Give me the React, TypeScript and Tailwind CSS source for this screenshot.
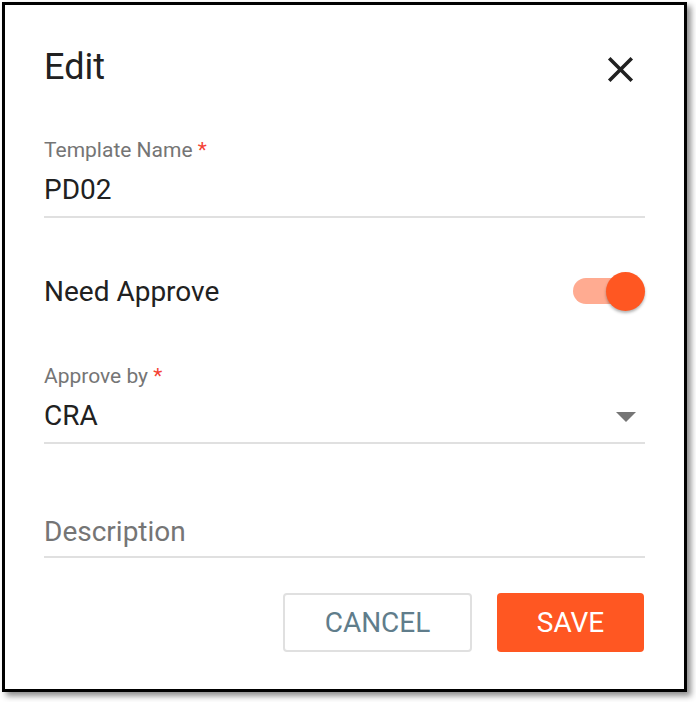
const CloseIcon = () => (
  <svg viewBox="0 0 24 24" className="w-[43px] h-[43px] mt-[1px] mr-[3px] fill-[#212121]">
    <path d="M19 6.41L17.59 5 12 10.59 6.41 5 5 6.41 10.59 12 5 17.59 6.41 19 12 13.41 17.59 19 19 17.59 13.41 12z" />
  </svg>
);

const ArrowDropDown = () => (
  <svg viewBox="0 0 24 24" className="w-[48px] h-[48px] -my-[8px] fill-[#757575] mr-[-5px]">
    <path d="M7 10l5 5 5-5z" />
  </svg>
);

const Label = ({ text }: { text: string }) => (
  <div className="text-[21px] leading-[24px] text-[#757575]">
    {text} <span className="text-[#f44336]">*</span>
  </div>
);

const App = () => {
  return (
    <div className="w-[696px] h-[702px] bg-white font-['Roboto',sans-serif]">
      <div className="ml-[2px] pt-[2px]">
        <div className="w-[685px] h-[690px] bg-white border-[3px] border-black shadow-[4px_4px_6px_rgba(0,0,0,0.45)] px-[39px]">
          {/* Title */}
          <div className="flex justify-between items-start pt-[42px]">
            <h2 className="text-[36px] leading-[40px] text-[#212121]">Edit</h2>
            <CloseIcon />
          </div>

          {/* Template Name */}
          <div className="mt-[47px]">
            <Label text="Template Name" />
            <div className="mt-[12px] pb-[10px] border-b-2 border-[#e0e0e0] text-[28px] leading-[32px] text-[#212121]">
              PD02
            </div>
          </div>

          {/* Need Approve */}
          <div className="mt-[54px] h-[40px] flex items-center justify-between">
            <div className="text-[28px] leading-[32px] text-[#212121]">Need Approve</div>
            <div className="relative w-[72px] h-[40px]">
              <div className="absolute left-0 top-[6px] w-[62px] h-[26px] rounded-full bg-[#ffab91]" />
              <div className="absolute right-0 top-0 w-[39px] h-[39px] rounded-full bg-[#ff5722] shadow-[0_2px_3px_rgba(0,0,0,0.3)]" />
            </div>
          </div>

          {/* Approve by */}
          <div className="mt-[52px]">
            <Label text="Approve by" />
            <div className="mt-[12px] pb-[10px] border-b-2 border-[#e0e0e0] flex items-center justify-between">
              <span className="text-[28px] leading-[32px] text-[#212121]">CRA</span>
              <ArrowDropDown />
            </div>
          </div>

          {/* Description */}
          <div className="mt-[72px] pb-[8px] border-b-2 border-[#e0e0e0] text-[28px] leading-[32px] text-[#757575]">
            Description
          </div>

          {/* Actions */}
          <div className="mt-[35px] flex justify-end gap-[25px] mr-[1px]">
            <button className="w-[189px] h-[59px] rounded-[4px] border-2 border-[#e0e0e0] bg-white text-[28px] text-[#607d8b]">
              CANCEL
            </button>
            <button className="w-[147px] h-[59px] rounded-[4px] bg-[#ff5722] text-[28px] text-white">
              SAVE
            </button>
          </div>
        </div>
      </div>
    </div>
  );
};

export default App;
